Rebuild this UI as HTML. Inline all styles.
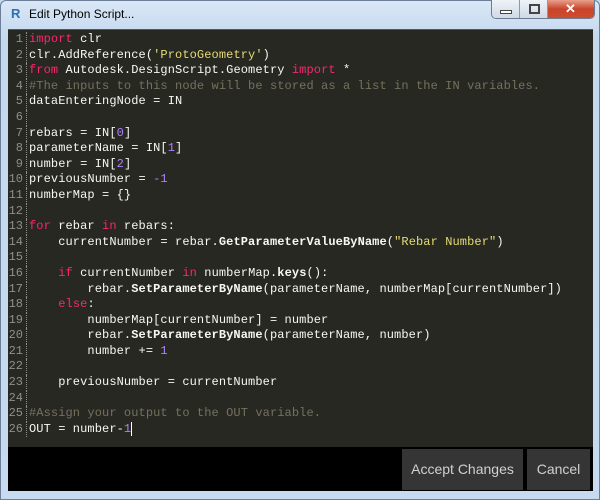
<!DOCTYPE html>
<html><head><style>
body{margin:0;width:600px;height:500px;overflow:hidden;background:#c5d9ef;font-family:"Liberation Sans",sans-serif;position:relative}
.frame{position:absolute;left:0;top:0;width:598px;height:498px;border:1px solid #6b7f99;border-radius:6px 6px 0 0;background:linear-gradient(#d9e7f6,#c3d7ee 40px,#c7daef)}
.title{position:absolute;left:29px;top:7px;font-size:12px;color:#000;font-family:"Liberation Sans",sans-serif}
.logo{position:absolute;left:11px;top:6px;font:bold 13px "Liberation Sans",sans-serif;color:#2c6fb6}
.btns{position:absolute;left:491px;top:0;height:18px;display:flex;border:1px solid #6b7b90;border-top:none;border-radius:0 0 5px 5px;overflow:hidden}
.b{width:27px;height:18px;background:linear-gradient(#eef3f8,#cfd9e5);border-right:1px solid #8a99ac;position:relative}
.x{width:46px;background:linear-gradient(#e8a08c,#c8452c 50%,#d04a2c);border:none}
.ed{position:absolute;left:8px;top:29px;width:585px;height:418px;background:#272822;border-top:1px solid #555}
.code{position:absolute;left:0;top:2px;font:12px/15.6px "Liberation Mono",monospace;letter-spacing:0.1px;color:#f8f8f2;white-space:pre}
.ln{display:inline-block;width:15px;text-align:right;color:#8f908a;padding-right:3px;border-right:1px dotted #8f908a;margin-right:2px;letter-spacing:0}
.k{color:#f92672}.s{color:#e6db74}.n{color:#ae81ff}.c{color:#75715e}.f{font-weight:bold}
.bar{position:absolute;left:8px;top:447px;width:585px;height:44px;background:#000}
.btn{position:absolute;top:449px;height:41px;background:#353535;color:#d0d0d0;font-size:14px;line-height:41px;text-align:center}
</style></head><body>
<div class="frame"></div>
<div class="logo">R</div>
<div class="title">Edit Python Script...</div>
<div class="btns"><div class="b"><div style="position:absolute;left:8px;top:10px;width:10px;height:2px;border:1px solid #444;background:#fff"></div></div><div class="b"><div style="position:absolute;left:9px;top:4px;width:7px;height:6px;border:2px solid #444"></div></div><div class="b x"><div style="position:absolute;left:17px;top:1px;color:#fff;font:bold 13px 'Liberation Sans'">✕</div></div></div>
<div class="ed"><div class="code"><span class="ln">1</span><span class="k">import</span> clr
<span class="ln">2</span>clr.AddReference(<span class="s">'ProtoGeometry'</span>)
<span class="ln">3</span><span class="k">from</span> Autodesk.DesignScript.Geometry <span class="k">import</span> *
<span class="ln">4</span><span class="c">#The inputs to this node will be stored as a list in the IN variables.</span>
<span class="ln">5</span>dataEnteringNode = IN
<span class="ln">6</span>
<span class="ln">7</span>rebars = IN[<span class="n">0</span>]
<span class="ln">8</span>parameterName = IN[<span class="n">1</span>]
<span class="ln">9</span>number = IN[<span class="n">2</span>]
<span class="ln">10</span>previousNumber = <span class="n">-1</span>
<span class="ln">11</span>numberMap = {}
<span class="ln">12</span>
<span class="ln">13</span><span class="k">for</span> rebar <span class="k">in</span> rebars:
<span class="ln">14</span>    currentNumber = rebar.<span class="f">GetParameterValueByName</span>(<span class="s">"Rebar Number"</span>)
<span class="ln">15</span>
<span class="ln">16</span>    <span class="k">if</span> currentNumber <span class="k">in</span> numberMap.<span class="f">keys</span>():
<span class="ln">17</span>        rebar.<span class="f">SetParameterByName</span>(parameterName, numberMap[currentNumber])
<span class="ln">18</span>    <span class="k">else</span>:
<span class="ln">19</span>        numberMap[currentNumber] = number
<span class="ln">20</span>        rebar.<span class="f">SetParameterByName</span>(parameterName, number)
<span class="ln">21</span>        number += <span class="n">1</span>
<span class="ln">22</span>
<span class="ln">23</span>    previousNumber = currentNumber
<span class="ln">24</span>
<span class="ln">25</span><span class="c">#Assign your output to the OUT variable.</span>
<span class="ln">26</span>OUT = number-<span class="n">1</span><span style="border-left:1px solid #fff"></span></div></div>
<div class="bar"></div>
<div class="btn" style="left:402px;width:121px">Accept Changes</div>
<div class="btn" style="left:527px;width:63px">Cancel</div>
</body></html>
